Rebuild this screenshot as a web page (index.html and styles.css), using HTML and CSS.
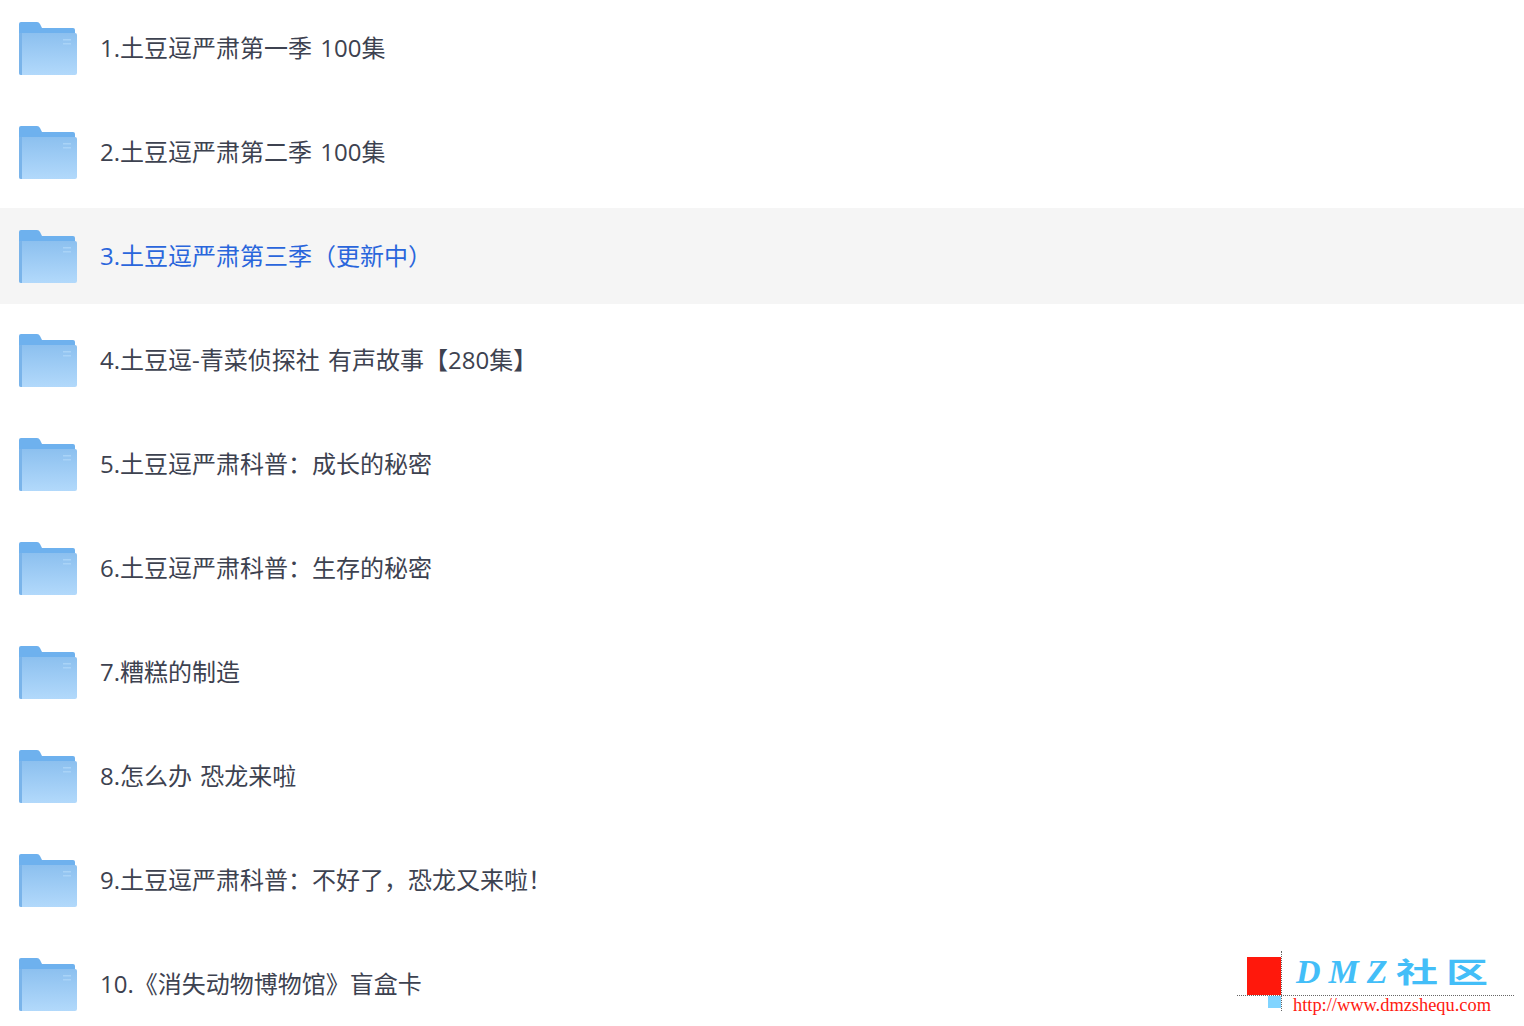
FILE: index.html
```html
<!DOCTYPE html>
<html lang="zh">
<head>
    <title>土豆逗</title>
    <link rel="stylesheet" href="styles.css">
</head>
<body>
    <svg class="sprite" width="0" height="0">
        <defs>
            <linearGradient id="folderFront" x1="0" y1="0" x2="0" y2="1">
                <stop offset="0" stop-color="#8cc0ef"/>
                <stop offset="1" stop-color="#b2d9fb"/>
            </linearGradient>
            <symbol id="folder" viewBox="0 0 58 54">
                <path d="M0 3q0-2 2-2h16q2 0 3 2l2 4h31q2 0 2 2v10H0z" fill="#6eb1ee"/>
                <path d="M2 12h54q2 0 2 2v38q0 2-2 2H2q-2 0-2-2V14q0-2 2-2z" fill="url(#folderFront)"/>
                <path d="M0 14q0-2 2-2h1v42H2q-2 0-2-2z" fill="#7ab4ea"/>
                <path d="M44 18h8v1.500h-8zM44 22h8v1.500h-8z" fill="#a9d3f7"/>
            </symbol>
        </defs>
    </svg>

    <ul class="list">
        <li class="row"><svg class="icon"><use href="#folder"/></svg><span class="name">1.土豆逗严肃第一季 100集</span></li>
        <li class="row"><svg class="icon"><use href="#folder"/></svg><span class="name">2.土豆逗严肃第二季 100集</span></li>
        <li class="row active"><svg class="icon"><use href="#folder"/></svg><span class="name">3.土豆逗严肃第三季（更新中）</span></li>
        <li class="row"><svg class="icon"><use href="#folder"/></svg><span class="name">4.土豆逗-青菜侦探社 有声故事【280集】</span></li>
        <li class="row"><svg class="icon"><use href="#folder"/></svg><span class="name">5.土豆逗严肃科普：成长的秘密</span></li>
        <li class="row"><svg class="icon"><use href="#folder"/></svg><span class="name">6.土豆逗严肃科普：生存的秘密</span></li>
        <li class="row"><svg class="icon"><use href="#folder"/></svg><span class="name">7.糟糕的制造</span></li>
        <li class="row"><svg class="icon"><use href="#folder"/></svg><span class="name">8.怎么办 恐龙来啦</span></li>
        <li class="row"><svg class="icon"><use href="#folder"/></svg><span class="name">9.土豆逗严肃科普：不好了，恐龙又来啦！</span></li>
        <li class="row"><svg class="icon"><use href="#folder"/></svg><span class="name">10.《消失动物博物馆》盲盒卡</span></li>
    </ul>

    <!-- Watermark -->
    <div class="mark">
        <div class="mark-red"></div>
        <div class="mark-blue"></div>
        <div class="mark-line-h"></div>
        <div class="mark-line-v"></div>
        <div class="mark-name">DMZ<span class="mark-cn">社区</span></div>
        <div class="mark-url">http://www.dmzshequ.com</div>
    </div>
</body>
</html>
```

FILE: styles.css
```css
body {
    margin: 0;
    height: 1026px;
    overflow: hidden;
    position: relative;
    background: #fff;
    font-family: "Open Sans", "Noto Sans CJK SC", sans-serif;
    font-weight: 400;
    font-size: 24px;
    word-spacing: 2px;
    color: #3d4250;
}

.sprite {
    display: block;
    height: 0;
}

.list {
    list-style: none;
    margin: 0;
    padding: 0;
}

.row {
    display: flex;
    align-items: center;
    height: 96px;
    margin-bottom: 8px;
    padding-left: 19px;
}
.row.active {
    background: #f5f5f5;
    color: #2a66dc;
}

.icon {
    width: 58px;
    height: 54px;
    margin-right: 23px;
    flex: none;
}

.name {
    padding-bottom: 4px;
}

/* Watermark */
.mark {
    position: absolute;
    left: 1220px;
    top: 940px;
    width: 304px;
    height: 86px;
}
.mark-red {
    position: absolute;
    left: 27px;
    top: 17px;
    width: 34px;
    height: 38px;
    background: #ff180c;
}
.mark-blue {
    position: absolute;
    left: 48px;
    top: 56px;
    width: 13px;
    height: 12px;
    background: #80d4ff;
}
.mark-line-h {
    position: absolute;
    left: 17px;
    top: 55px;
    width: 277px;
    border-top: 1px dotted #666;
}
.mark-line-v {
    position: absolute;
    left: 61px;
    top: 11px;
    height: 60px;
    border-left: 1px dotted #666;
}
.mark-name {
    position: absolute;
    left: 76px;
    top: 11px;
    font-family: "Liberation Serif", serif;
    font-style: italic;
    font-weight: 700;
    font-size: 34px;
    line-height: 40px;
    letter-spacing: 8px;
    color: #43bef8;
    white-space: nowrap;
}
.mark-cn {
    display: inline-block;
    font-family: "Noto Sans CJK SC", sans-serif;
    font-style: normal;
    font-size: 28px;
    letter-spacing: 5.300px;
    transform: scaleX(1.500);
    transform-origin: left center;
}
.mark-url {
    position: absolute;
    left: 73px;
    top: 55px;
    font-family: "Liberation Serif", serif;
    font-weight: 400;
    font-size: 18.400px;
    line-height: 20px;
    color: #ff1a10;
    white-space: nowrap;
}
```
